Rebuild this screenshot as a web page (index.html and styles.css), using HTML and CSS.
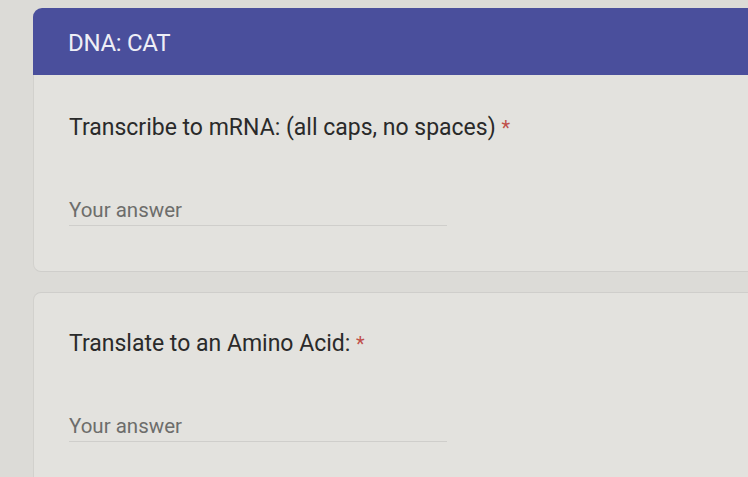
FILE: index.html
```html
<!DOCTYPE html>
<html>
<head>
<meta charset="utf-8">
<link rel="stylesheet" href="styles.css">
</head>
<body>
<div class="page">
  <div class="header-card">
    <div class="header-title">DNA: CAT</div>
  </div>
  <div class="card first">
    <div class="question">Transcribe to mRNA: (all caps, no spaces) <span class="req">*</span></div>
    <div class="answer">Your answer</div>
  </div>
  <div class="card second">
    <div class="question">Translate to an Amino Acid: <span class="req">*</span></div>
    <div class="answer">Your answer</div>
  </div>
</div>
</body>
</html>
```
FILE: styles.css
```css
html, body {
  margin: 0;
  padding: 0;
  overflow: hidden;
  background: #dcdbd7;
  width: 748px;
  height: 477px;
}
.page {
  padding: 8px 0 0 33px;
  display: flex;
  flex-direction: column;
  width: 740px;
  font-family: Roboto, "Open Sans", sans-serif;
}
.header-card {
  background: #4a4f9c;
  border-radius: 9px 0 0 0;
  height: 67px;
  display: flex;
  align-items: center;
  padding-left: 35px;
  box-sizing: border-box;
}
.header-title {
  color: #eeeef6;
  font-size: 24px;
  letter-spacing: -0.3px;
  padding-top: 2px;
}
.card {
  background: #e3e2de;
  border-left: 1px solid #d2d1cd;
  box-sizing: border-box;
  padding-left: 35px;
}
.card.first {
  height: 197px;
  border-radius: 0 0 0 8px;
  border-bottom: 1px solid #cfcecb;
  padding-top: 38px;
}
.card.second {
  margin-top: 20px;
  border-top: 1px solid #cfcecb;
  border-radius: 8px 0 0 0;
  height: 200px;
  padding-top: 36px;
}
.question {
  font-size: 23px;
  color: #2a2a2a;
  line-height: 30px;
}
.req {
  color: #c0504a;
  font-size: 20px;
}
.answer {
  margin-top: 55px;
  width: 378px;
  font-size: 20.5px;
  color: #6d6d6b;
  line-height: 24px;
  padding-bottom: 3px;
  border-bottom: 1px solid #cfcecb;
}
```
